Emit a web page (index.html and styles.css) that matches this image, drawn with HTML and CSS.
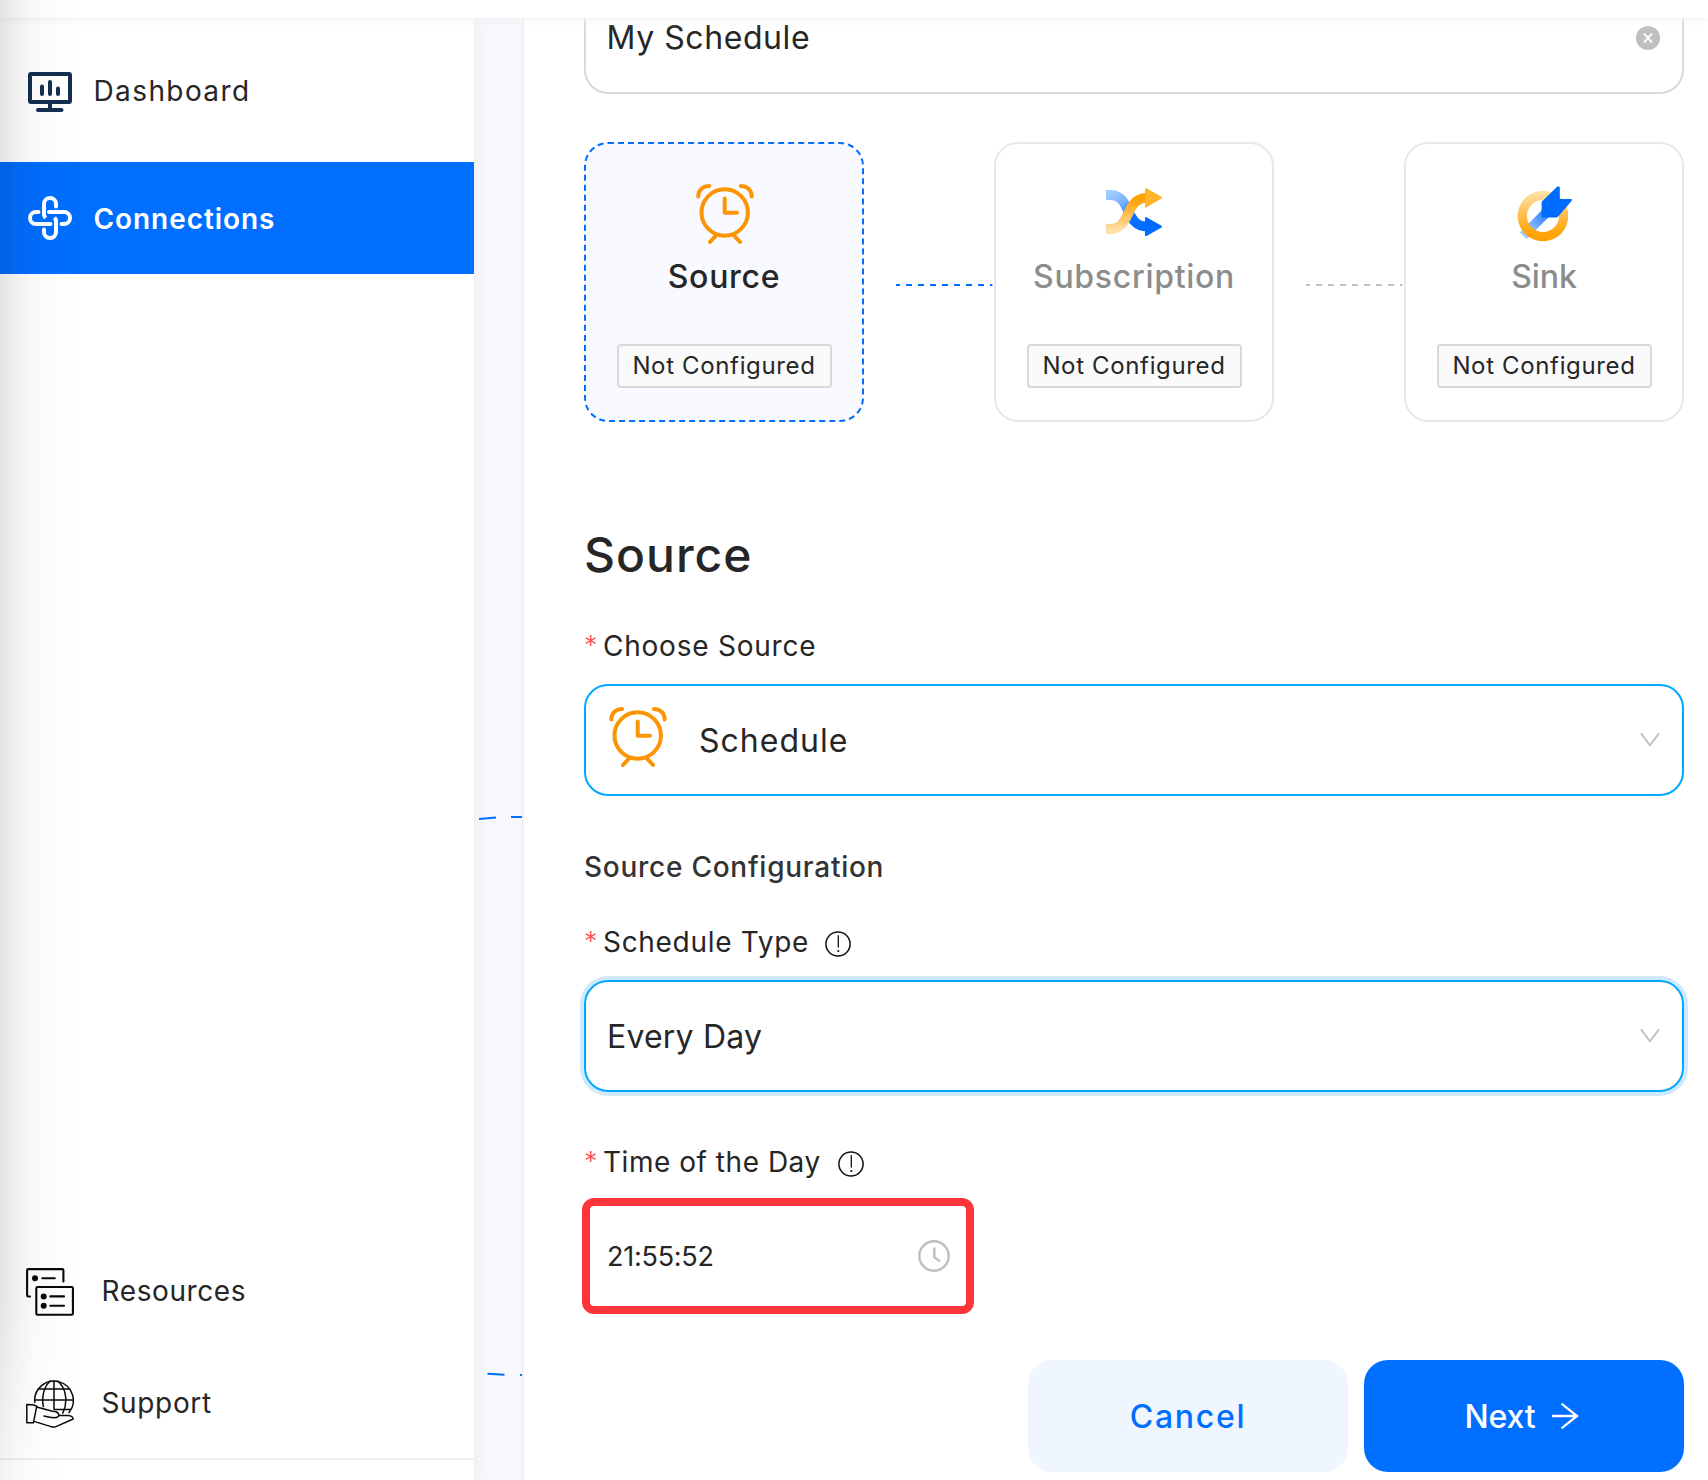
FILE: index.html
```
<!DOCTYPE html>
<html lang="en">
<head>
<meta charset="utf-8">
<title>Connections</title>
<link rel="stylesheet" href="styles.css">
</head>
<body>
<svg class="defs" aria-hidden="true">
  <defs>
    <symbol id="alarm" viewBox="0 0 58 60">
      <g fill="none" stroke="#fc9505" stroke-width="4" stroke-linecap="round" stroke-linejoin="round">
        <circle cx="28.7" cy="28.5" r="23.2"/>
        <path d="M28.7 14.5V28.7H41M2.3 12.5C2.3 6 7 2 13.2 2M44.8 2C51 2 55.7 6 55.7 12.5M20.6 50.8L14 58M37.4 50.8L44 58"/>
      </g>
    </symbol>
    <symbol id="chevron" viewBox="0 0 20 14">
      <path d="M1 .4L10 12.3L19 .4" fill="none" stroke="#bfbfbf" stroke-width="1.9"/>
    </symbol>
    <symbol id="info" viewBox="0 0 26 26">
      <circle cx="13" cy="13" r="12.1" fill="none" stroke="#111" stroke-width="1.5"/>
      <path d="M13.3 4.2V16.6" stroke="#111" stroke-width="1.3"/>
      <circle cx="13.3" cy="20" r="1.1" fill="#111"/>
    </symbol>
  </defs>
</svg>
<div class="page">
  <header class="topbar"></header>
  <div class="layout">
    <nav class="sidebar">
      <a class="nav-item dashboard">
        <svg width="44" height="40" viewBox="0 0 44 40" fill="none" stroke="#152f52" stroke-width="4" stroke-linecap="round" stroke-linejoin="round">
          <rect x="2" y="2" width="40" height="28" rx="1"/>
          <path d="M14 14.5V22M22 10V22M30 16.5V22M22 31V37M10 38H33.5"/>
        </svg>
        <span>Dashboard</span>
      </a>
      <a class="nav-item active">
        <svg width="44" height="44" viewBox="0 0 44 44" fill="none" stroke="#fff" stroke-width="4">
          <path d="M16 8V18.5C16 20 16.6 20.8 17.6 22"/>
          <path d="M16 18V8A6 6 0 0 1 28 8V10.5M21 16H36A6 6 0 0 1 36 28H33.5M28 26V36A6 6 0 0 1 16 36V33.5M22.5 28H8A6 6 0 0 1 8 16H10.5" stroke-linecap="round"/>
          <path d="M28 27V25C28 23.5 27.4 22.8 26.4 21.6"/>
        </svg>
        <span>Connections</span>
      </a>
      <div class="nav-bottom">
        <a class="nav-item resources">
          <svg width="48" height="48" viewBox="0 0 48 48" fill="none" stroke="#0a0a0a" stroke-width="2.1" stroke-linecap="round" stroke-linejoin="round">
            <path d="M4 28.5H2.4Q1.1 28.5 1.1 27.2V2.4Q1.1 1.1 2.4 1.1H36.2Q37.4 1.1 37.4 2.4V13.5"/>
            <rect x="10.3" y="19" width="36.6" height="27.8" rx="1.2"/>
            <path d="M16.3 10.3H28.8M24.3 28.4H38M24.3 37.7H38"/>
            <g fill="#0a0a0a" stroke="none"><circle cx="9" cy="10.3" r="3"/><circle cx="17.7" cy="28.4" r="3"/><circle cx="17.7" cy="37.7" r="3"/></g>
          </svg>
          <span>Resources</span>
        </a>
        <a class="nav-item support">
          <svg width="48" height="48" viewBox="0 0 48 48" fill="none" stroke="#0a0a0a" stroke-width="1.5" stroke-linecap="round" stroke-linejoin="round">
            <path d="M8.8 22.5A19.3 19.3 0 1 1 43 32.5"/>
            <path d="M28 .8V29.4M8.7 20.1H47M12.2 9H43.8M28 29.4H44.6"/>
            <path d="M24.5 1C18 6 15.3 17 17.4 26.6M31.5 1C42 9 41 25 36.8 33.2"/>
            <path d="M.8 24.4L7 24.8L10.8 26.2L7.4 42.8H.8ZM10.6 27L26.5 31.2C30 31.2 33 32.6 32.8 35.4C32.2 38.6 26 38.2 18 36M32.8 35.4L42 35.6C44.5 35.8 47 37.2 47.2 39L30 46.6Q27.5 47.6 25 46.6L8 41.4"/>
          </svg>
          <span>Support</span>
        </a>
      </div>
    </nav>
    <div class="canvas">
      <svg width="48" height="1462" viewBox="0 0 48 1462" fill="none" stroke="#006eff" stroke-width="2">
        <path d="M5 801L22 799.5M37 799H48M13.5 1355.7L30.5 1356.8M46 1357H48"/>
      </svg>
    </div>
    <main class="drawer">
      <div class="name-field">
        <span>My Schedule</span>
        <svg width="24" height="24" viewBox="0 0 24 24"><circle cx="12" cy="12" r="12" fill="#bfbfbf"/><path d="M8 7.3L16 16.7M16 7.3L8 16.7" stroke="#fff" stroke-width="1.8"/></svg>
      </div>
      <div class="steps">
        <section class="step current">
          <svg class="step-icon alarm" width="58" height="60"><use href="#alarm"/></svg>
          <h3>Source</h3>
          <span class="tag">Not Configured</span>
        </section>
        <svg class="link" width="130" height="4" viewBox="0 0 130 4"><path d="M32 2H128.4" stroke="#006eff" stroke-width="2" stroke-dasharray="6 6" stroke-dashoffset="2"/></svg>
        <section class="step">
          <svg class="step-icon" width="56" height="60" viewBox="0 -4 56 60">
            <defs>
              <linearGradient id="sb" gradientUnits="userSpaceOnUse" x1="6" y1="4" x2="34" y2="42"><stop offset="0" stop-color="#a0cbff"/><stop offset=".28" stop-color="#7fb5ff"/><stop offset=".68" stop-color="#0a72ff"/><stop offset="1" stop-color="#006bff"/></linearGradient>
              <linearGradient id="sy" gradientUnits="userSpaceOnUse" x1="20" y1="10" x2="20" y2="42"><stop offset="0" stop-color="#ff9f00"/><stop offset=".5" stop-color="#ffbd50"/><stop offset="1" stop-color="#ffe0a6"/></linearGradient>
            </defs>
            <path d="M0 7H5C26 8 18 39 42 38.7" fill="none" stroke="url(#sb)" stroke-width="9.8"/>
            <path d="M0 41H5C26 40 18 10 42 9.7" fill="none" stroke="url(#sy)" stroke-width="9.8"/>
            <path d="M40 1L55 9.7L40 18.4Z" fill="#ffb42b" stroke="#ffb42b" stroke-width="2" stroke-linejoin="round"/>
            <path d="M40 30L55 38.7L40 47.2Z" fill="#006bff" stroke="#006bff" stroke-width="2" stroke-linejoin="round"/>
          </svg>
          <h3 class="subscription">Subscription</h3>
          <span class="tag">Not Configured</span>
        </section>
        <svg class="link" width="130" height="4" viewBox="0 0 130 4"><path d="M32 2H128.4" stroke="#bfbfbf" stroke-width="2" stroke-dasharray="6 6" stroke-dashoffset="2"/></svg>
        <section class="step">
          <svg class="step-icon" width="56" height="60" viewBox="0 0 56 60">
            <defs>
              <linearGradient id="kb" gradientUnits="userSpaceOnUse" x1="7" y1="52" x2="32" y2="27"><stop offset="0" stop-color="#a3cdff"/><stop offset=".45" stop-color="#74aeff"/><stop offset="1" stop-color="#1a78ff"/></linearGradient>
              <linearGradient id="ky" x1="0" y1="0" x2="0" y2="1"><stop offset="0" stop-color="#ffe3ab"/><stop offset=".8" stop-color="#ffa60f"/><stop offset="1" stop-color="#ff9f00"/></linearGradient>
            </defs>
            <path d="M7.3 51.7L33 26" stroke="url(#kb)" stroke-width="9.6"/>
            <path fill-rule="evenodd" fill="url(#ky)" d="M1.7 32A25.3 25.3 0 1 1 52.3 32A25.3 25.3 0 1 1 1.7 32ZM11 32A16 16 0 1 0 43 32A16 16 0 1 0 11 32Z"/>
            <path d="M42.8 3.6V16H55L41 32.4H26.6V18.2L41.8 3.4Z" fill="#006bff" stroke="#006bff" stroke-width="2" stroke-linejoin="round"/>
          </svg>
          <h3 class="sink">Sink</h3>
          <span class="tag">Not Configured</span>
        </section>
      </div>
      <h2>Source</h2>
      <label class="label first"><i>*</i><span class="choose">Choose Source</span></label>
      <div class="select">
        <svg class="select-icon" width="58" height="60"><use href="#alarm"/></svg>
        <span class="schedule">Schedule</span>
        <svg class="chevron" width="20" height="14"><use href="#chevron"/></svg>
      </div>
      <h4>Source Configuration</h4>
      <label class="label"><i>*</i><span class="type">Schedule Type</span><svg width="26" height="26"><use href="#info"/></svg></label>
      <div class="select focused">
        <span class="every">Every Day</span>
        <svg class="chevron" width="20" height="14"><use href="#chevron"/></svg>
      </div>
      <label class="label time-label"><i>*</i><span class="time-of">Time of the Day</span><svg width="26" height="26"><use href="#info"/></svg></label>
      <div class="time">
        <span>21:55:52</span>
        <svg width="32" height="32" viewBox="0 0 32 32" fill="none" stroke="#bfbfbf" stroke-width="2.4"><circle cx="16" cy="16" r="14.7"/><path d="M16.3 7.6V17.2L22 21.4"/></svg>
      </div>
      <div class="actions">
        <button class="cancel">Cancel</button>
        <button class="next"><span>Next</span><svg width="32" height="32" viewBox="0 0 32 32" fill="none" stroke="#fff" stroke-width="2.3"><path d="M3 16H28M12.5 3.6L28 16L12.5 28.4"/></svg></button>
      </div>
    </main>
  </div>
  <div class="edge-shade"></div>
</div>
</body>
</html>
```
FILE: styles.css
```
* { box-sizing: border-box; }
body { margin: 0; background: #fff; color: #262626; font-family: Inter, "Open Sans", sans-serif; font-size: 28px; }
svg { display: block; flex: none; }
.defs { position: absolute; width: 0; height: 0; }
h2, h3, h4 { margin: 0; font-weight: 500; }

.page { position: relative; width: 1708px; height: 1480px; overflow: hidden; display: flex; flex-direction: column; }
.topbar { position: relative; z-index: 2; flex: none; height: 18px; background: #fff; box-shadow: 0 2px 8px #f0f1f2; }
.layout { flex: 1; min-height: 0; display: flex; }
.edge-shade {
  position: absolute; inset: 0 auto 0 0; width: 80px; z-index: 3; pointer-events: none;
  background: linear-gradient(90deg, rgba(0,0,0,.105), rgba(0,0,0,.06) 20%, rgba(0,0,0,.025) 42%, rgba(0,0,0,.008) 75%, transparent);
  -webkit-mask-image: linear-gradient(#000 88%, rgba(0,0,0,.45));
  mask-image: linear-gradient(#000 88%, rgba(0,0,0,.45));
}

.sidebar { position: relative; z-index: 1; flex: none; width: 474px; padding-top: 16px; background: #fff; display: flex; flex-direction: column; gap: 16px; box-shadow: 0 0 16px rgba(29,35,41,.06); }
.nav-item { height: 112px; display: flex; align-items: center; padding-left: 28px; gap: 21.5px; line-height: 40px; }
.nav-item span { padding-top: 1px; }
.nav-item.dashboard { letter-spacing: 1.4px; }
.nav-item.dashboard svg { margin-top: 4px; }
.nav-item.active { background: #006eff; color: #fff; font-weight: 600; letter-spacing: .93px; }
.nav-bottom { margin-top: auto; margin-bottom: 20px; border-bottom: 2px solid #f0f0f0; }
.nav-bottom .nav-item { padding-left: 26px; gap: 27.5px; }
.nav-bottom svg { margin-top: 4px; }
.resources { letter-spacing: .6px; }
.support { letter-spacing: .65px; }

.canvas { flex: none; width: 48px; background: #f6f8fc; }

.drawer { flex: 1; min-width: 0; padding: 0 24px 0 60px; background: #fff; border-left: 2px solid #f0f0f0; overflow: hidden; font-size: 32px; }
.name-field { height: 112px; margin-top: -36px; border: 2px solid #d9d9d9; border-radius: 24px; padding: 0 22px 0 20.5px; display: flex; align-items: center; justify-content: space-between; letter-spacing: .57px; }
.name-field span { padding-bottom: 2px; }

.steps { margin-top: 48px; display: flex; align-items: flex-start; }
.step { flex: none; width: 280px; height: 280px; padding-top: 40px; border: 2px solid #e8e8e8; border-radius: 24px; display: flex; flex-direction: column; align-items: center; color: #8c8c8c; }
.step.current { background: #f9faff; border: 2px dashed #006eff; color: #262626; }
.step-icon.alarm { margin-left: 2px; }
.step h3 { margin-top: 9px; font-size: 32px; line-height: 48px; letter-spacing: .7px; }
.step h3.sink { letter-spacing: -.1px; }
.tag { margin-top: 43px; width: 215px; height: 44px; border: 2px solid #d9d9d9; border-radius: 4px; background: #fafafa; color: #262626; font-size: 24px; line-height: 40px; letter-spacing: .65px; text-align: center; white-space: nowrap; }
.link { margin-top: 141px; }

h2 { margin-top: 97px; font-size: 48px; line-height: 72px; letter-spacing: 1px; }
.label { display: flex; align-items: center; height: 40px; margin-top: 36px; font-size: 28px; }
.label.first { margin-top: 35px; }
.label.time-label { margin-top: 50px; }
.label i { width: 19px; font-style: normal; font-weight: 300; font-size: 27px; line-height: 40px; color: #ff4d4f; }
.label svg { margin: 4px 0 0 15.5px; }
.label.time-label svg { margin-left: 17px; }
.choose { letter-spacing: .77px; }
.type { letter-spacing: .69px; }
.time-of { letter-spacing: .53px; }
h4 { margin-top: 51px; margin-bottom: -1px; font-size: 28px; line-height: 40px; letter-spacing: .74px; color: #333; }

.select { height: 112px; margin-top: 18px; border: 2px solid #00a8ff; border-radius: 24px; padding: 0 22px 0 21px; display: flex; align-items: center; }
.select.focused { box-shadow: 0 0 0 4px #cfe9ff; }
.select-icon { margin: -6px 32px 0 2px; }
.schedule { letter-spacing: 1px; }
.every { letter-spacing: .2px; }
.chevron { margin-left: auto; }

.time { width: 392px; height: 116px; margin: 16px 0 0 -2px; border: 8px solid #ff343b; border-radius: 12px; padding: 0 16px 0 17px; display: flex; align-items: center; justify-content: space-between; font-size: 27px; letter-spacing: -.25px; }
.actions { margin-top: 46px; display: flex; justify-content: flex-end; gap: 16px; }
.actions button { width: 320px; height: 112px; border: 0; border-radius: 24px; padding: 0; display: flex; align-items: center; justify-content: center; font: 500 32px Inter, "Open Sans", sans-serif; }
.actions .cancel { background: #eff6ff; color: #006eff; letter-spacing: 1.7px; }
.actions .next { background: #006eff; color: #fff; gap: 14px; letter-spacing: -.2px; padding-right: 2px; }
```
